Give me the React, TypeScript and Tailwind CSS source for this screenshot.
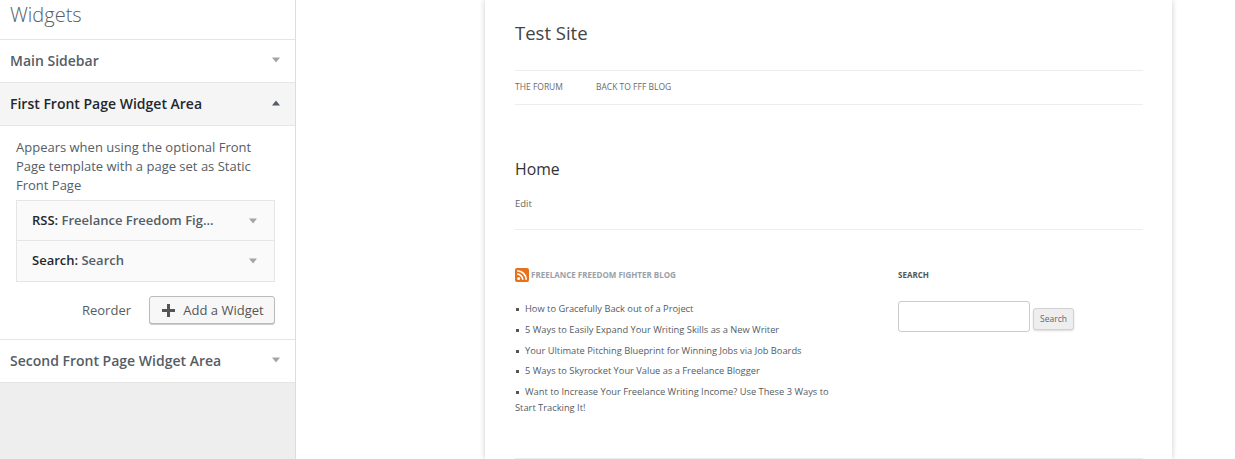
const posts = [
  'How to Gracefully Back out of a Project',
  '5 Ways to Easily Expand Your Writing Skills as a New Writer',
  'Your Ultimate Pitching Blueprint for Winning Jobs via Job Boards',
  '5 Ways to Skyrocket Your Value as a Freelance Blogger',
  'Want to Increase Your Freelance Writing Income? Use These 3 Ways to Start Tracking It!',
];

function Arrow({ up = false, dark = false }: { up?: boolean; dark?: boolean }) {
  return (
    <svg width="8" height="6" viewBox="0 0 8 6" className="shrink-0">
      <path d={up ? 'M4 0.5L8 5.5H0Z' : 'M0 0.5H8L4 5.5Z'} fill={dark ? '#555d66' : '#a0a5aa'} />
    </svg>
  );
}

function SectionRow({ title, open = false }: { title: string; open?: boolean }) {
  return (
    <div
      className={`flex h-[43px] items-center justify-between border-b border-[#e5e5e5] pb-[2px] pl-[10px] pr-[15px] text-[14px] font-semibold ${
        open ? 'bg-[#f5f5f5] text-[#23282d]' : 'bg-white text-[#555d66]'
      }`}
    >
      <span>{title}</span>
      <Arrow up={open} dark={open} />
    </div>
  );
}

function WidgetRow({ name, title, last = false }: { name: string; title: string; last?: boolean }) {
  return (
    <div
      className={`flex h-[40px] items-center justify-between pl-[15px] pr-[17px] text-[13px] font-semibold text-[#555d66] ${
        last ? '' : 'border-b border-[#e5e5e5]'
      }`}
    >
      <span>
        <span className="text-[#23282d]">{name}:</span> {title}
      </span>
      <Arrow />
    </div>
  );
}

function RssIcon() {
  return (
    <svg width="14" height="14" viewBox="0 0 14 14" className="shrink-0">
      <rect width="14" height="14" rx="2" fill="#e8701a" />
      <circle cx="3.6" cy="10.4" r="1.5" fill="#fff" />
      <path d="M2.2 6.2a5.6 5.6 0 0 1 5.6 5.6" stroke="#fff" strokeWidth="1.7" fill="none" />
      <path d="M2.2 2.8a9 9 0 0 1 9 9" stroke="#fff" strokeWidth="1.7" fill="none" />
    </svg>
  );
}

function Sidebar() {
  return (
    <aside className="flex w-[296px] shrink-0 flex-col border-r border-[#ddd] bg-[#eee]">
      <div className="flex h-[40px] items-center border-b border-[#e5e5e5] bg-white pb-[9px] pl-[10px] text-[20px] font-light text-[#555d66]">
        Widgets
      </div>
      <SectionRow title="Main Sidebar" />
      <SectionRow title="First Front Page Widget Area" open />
      <div className="border-b border-[#e5e5e5] bg-white pl-[16px] pr-[20px]">
        <p className="pt-[12px] text-[13px] leading-[19px] text-[#555d66]">
          Appears when using the optional Front Page template with a page set as Static Front Page
        </p>
        <div className="mt-[5px] border border-[#e5e5e5] bg-[#fafafa]">
          <WidgetRow name="RSS" title="Freelance Freedom Fig..." />
          <WidgetRow name="Search" title="Search" last />
        </div>
        <div className="mt-[14px] mb-[15px] flex items-center justify-end gap-[18px]">
          <span className="pt-[2px] text-[13px] text-[#555d66]">Reorder</span>
          <button className="flex h-[28px] w-[126px] items-center justify-center gap-[8px] rounded-[3px] border border-[#bbb] bg-[#f7f7f7] pl-[2px] text-[13px] text-[#555] shadow-[0_1px_0_#ccc]">
            <svg width="13" height="13" viewBox="0 0 13 13" className="shrink-0">
              <path d="M5 0h3v5h5v3H8v5H5V8H0V5h5z" fill="#555" />
            </svg>
            <span className="pt-[2px]">Add a Widget</span>
          </button>
        </div>
      </div>
      <SectionRow title="Second Front Page Widget Area" />
    </aside>
  );
}

function Preview() {
  return (
    <main className="flex-1 bg-white pl-[189px]">
      <div className="h-[459px] w-[687px] overflow-hidden bg-white pl-[30px] pr-[29px] shadow-[0_0_6px_rgba(0,0,0,0.2)]">
        <h1 className="pt-[20px] text-[18.5px] leading-[26px] text-[#444]">Test Site</h1>
        <nav className="mt-[24px] flex h-[35px] items-center gap-[33px] border-y border-[#ededed] text-[8.5px] uppercase text-[#6a6a6a]">
          <span>The Forum</span>
          <span>Back to FFF Blog</span>
        </nav>
        <h2 className="mt-[53px] text-[15.8px] leading-[22px] text-[#333]">Home</h2>
        <div className="mt-[17px] text-[9.5px] leading-[13px] text-[#666]">Edit</div>
        <div className="mt-[19px] border-t border-[#ededed]" />
        <div className="mt-[38px] flex">
          <section className="w-[383px] shrink-0">
            <h3 className="flex h-[14px] items-center gap-[2px] text-[8px] font-bold uppercase text-[#9aa1a9]">
              <RssIcon />
              Freelance Freedom Fighter Blog
            </h3>
            <ul className="mt-[19px] w-[320px] text-[9.3px] leading-[16px] text-[#515c66]">
              {posts.map((p) => (
                <li key={p} className="mb-[4.8px]">
                  <span className="mr-[6px] ml-[1px] inline-block h-[3px] w-[3px] align-middle bg-[#555]" />
                  {p}
                </li>
              ))}
            </ul>
          </section>
          <section>
            <h3 className="flex h-[14px] items-center text-[8px] font-bold uppercase text-[#555]">Search</h3>
            <div className="mt-[19px] flex items-end gap-[3px]">
              <div className="h-[31px] w-[132px] rounded-[3px] border border-[#ccc] bg-white" />
              <button className="mb-[2px] h-[22px] w-[41px] rounded-[3px] border border-[#d2d2d2] bg-[#eee] text-[8.5px] text-[#666] shadow-[0_1px_2px_rgba(0,0,0,0.15)]">
                Search
              </button>
            </div>
          </section>
        </div>
        <div className="mt-[37px] border-t border-[#ededed]" />
      </div>
    </main>
  );
}

export default function App() {
  return (
    <div className="flex h-[459px] w-[1235px] overflow-hidden font-['Open_Sans',sans-serif]">
      <Sidebar />
      <Preview />
    </div>
  );
}
